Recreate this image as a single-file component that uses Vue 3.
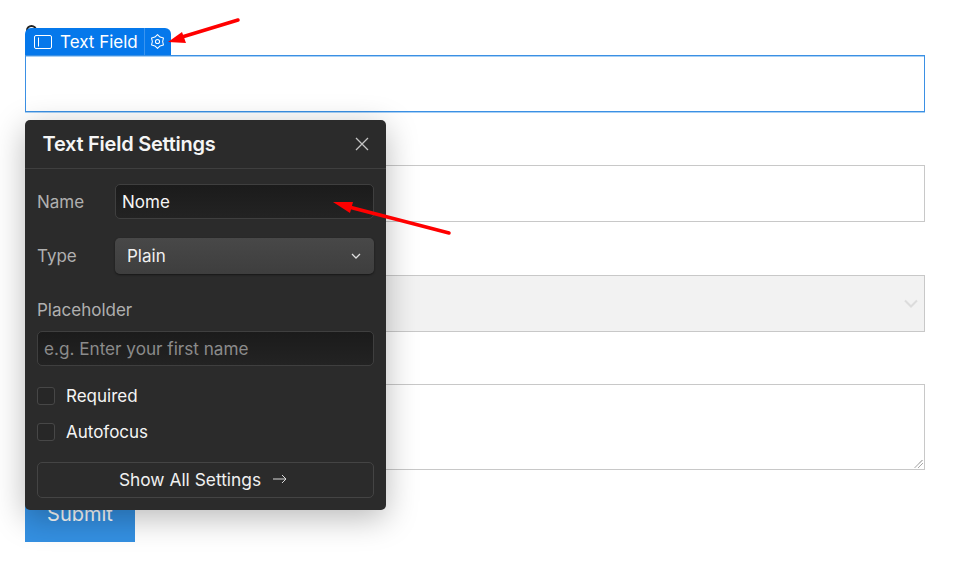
<script setup>
const fields = [
  { kind: 'input', arc: true },
  { kind: 'input' },
  { kind: 'select' },
  { kind: 'textarea' },
]
</script>

<template>
  <div class="page">
    <form class="form" @submit.prevent>
      <div v-for="(f, i) in fields" :key="i" class="group" :class="f.kind">
        <div class="label"><span v-if="f.arc" class="arc"></span></div>
        <div class="control" :class="[f.kind, { selected: i === 0 }]">
          <svg v-if="f.kind === 'select'" class="sel-chev" width="14" height="9" viewBox="0 0 14 9"><path d="M1 1.500l6 6 6-6" fill="none" stroke="#dcdcdc" stroke-width="2"/></svg>
          <svg v-if="f.kind === 'textarea'" class="grip" width="9" height="9" viewBox="0 0 9 9"><path d="M1 8.500L8.500 1M4.500 8.500L8.500 4.500" fill="none" stroke="#555" stroke-width="1" stroke-dasharray="1 .6"/></svg>
        </div>
      </div>
      <button class="submit" type="button">Submit</button>
    </form>

    <div class="tag">
      <span class="tag-main">
        <svg width="18" height="14" viewBox="0 0 18 14"><rect x=".5" y=".5" width="17" height="13" rx="1.500" fill="none" stroke="#fff"/><path d="M4.500 2.500v9" stroke="#fff"/></svg>
        <span class="tag-text">Text Field</span>
      </span>
      <span class="tag-gear">
        <svg width="15" height="15" viewBox="0 0 24 24" fill="none" stroke="#fff" stroke-width="1.700" stroke-linejoin="round"><path d="M12 1L16.100 4.900 21.500 6.500 20.200 12 21.500 17.500 16.100 19.100 12 23 7.900 19.100 2.500 17.500 3.800 12 2.500 6.500 7.900 4.900Z"/><circle cx="12" cy="12" r="3.300"/></svg>
      </span>
    </div>

    <section class="panel">
      <header class="panel-head">
        <h2>Text Field Settings</h2>
        <svg width="14" height="14" viewBox="0 0 14 14"><path d="M1 1l12 12M13 1L1 13" stroke="#c4c4c4" stroke-width="1.300" fill="none"/></svg>
      </header>
      <div class="panel-body">
        <div class="row">
          <span class="plabel">Name</span>
          <div class="pinput">Nome</div>
        </div>
        <div class="row type-row">
          <span class="plabel">Type</span>
          <div class="pselect">
            <span>Plain</span>
            <svg width="10" height="6" viewBox="0 0 10 6"><path d="M1 1l4 4 4-4" fill="none" stroke="#e0e0e0" stroke-width="1.300"/></svg>
          </div>
        </div>
        <span class="plabel ph-label">Placeholder</span>
        <div class="pinput ph">e.g. Enter your first name</div>
        <div class="check first"><i></i><span>Required</span></div>
        <div class="check"><i></i><span>Autofocus</span></div>
        <div class="show">
          <span>Show All Settings</span>
          <svg width="14" height="10" viewBox="0 0 14 10"><path d="M0 5h13M9 1l4 4-4 4" fill="none" stroke="#d8d8d8" stroke-width="1"/></svg>
        </div>
      </div>
    </section>

    <svg class="arrows" width="962" height="565" viewBox="0 0 962 565">
      <path d="M238 20L182 37" stroke="#f00" stroke-width="3.500" stroke-linecap="round"/>
      <path d="M168 42L182 32L186 43Z" fill="#f00"/>
      <path d="M449 233L349 207" stroke="#f00" stroke-width="3.500" stroke-linecap="round"/>
      <path d="M333 202L353 202L350 213Z" fill="#f00"/>
    </svg>
  </div>
</template>

<style>
html, body { margin: 0; background: #fff; }
</style>

<style scoped>
.page {
  position: relative;
  width: 962px;
  height: 565px;
  overflow: hidden;
  background: #fff;
  font-family: Inter, "Liberation Sans", sans-serif;
}
.form { padding: 22px 37px 0 25px; display: flex; flex-direction: column; }
.group { display: flex; flex-direction: column; margin-bottom: 20px; }
.group.textarea { margin-bottom: 16px; }
.group.select { margin-bottom: 19px; }
.label { height: 33px; }
.arc {
  display: block;
  box-sizing: border-box;
  width: 11px;
  height: 11px;
  margin: 3px 0 0 1px;
  border: 2.500px solid #222;
  border-radius: 50%;
}
.control {
  position: relative;
  box-sizing: border-box;
  height: 57px;
  border: 1px solid #c8c8c8;
  background: #fff;
}
.control.selected {
  border-color: #3b90e4;
  box-shadow: 0 1px 0 #a8d0f5, inset 0 1px 0 #a8d0f5;
}
.control.select { background: #f2f2f2; }
.control.textarea { height: 86px; }
.sel-chev { position: absolute; right: 6px; top: 23px; }
.grip { position: absolute; right: 1px; bottom: 1px; }
.submit {
  width: 110px;
  height: 56px;
  border: 0;
  background: #3490e2;
  color: #fff;
  font: 400 20px Inter, "Liberation Sans", sans-serif;
}
.tag {
  position: absolute;
  left: 25px;
  top: 28px;
  height: 27px;
  display: flex;
  background: #0578eb;
  border-radius: 6px 6px 0 0;
  color: #fff;
  font-size: 17px;
}
.tag-main { display: flex; align-items: center; gap: 8px; padding: 0 6px 0 9px; line-height: 27px; }
.tag-text { position: relative; top: 1px; }
.tag-gear { display: flex; align-items: center; justify-content: center; width: 27px; border-left: 1px solid #3a94ef; box-sizing: border-box; }
.panel {
  position: absolute;
  left: 25px;
  top: 120px;
  width: 361px;
  height: 390px;
  background: #2b2b2b;
  border-radius: 5px;
  box-shadow: 0 8px 32px rgba(0,0,0,.28);
  color: #fff;
}
.panel-head {
  height: 49px;
  box-sizing: border-box;
  border-bottom: 1px solid #3f3f3f;
  display: flex;
  align-items: center;
  justify-content: space-between;
  padding: 0 17px 0 18px;
}
.panel-head h2 { margin: 0 0 0 -.5px; font-size: 20px; font-weight: 600; letter-spacing: -.25px; color: #f5f5f5; }
.panel-body { padding: 15px 12px 0; display: flex; flex-direction: column; }
.row { display: flex; align-items: center; }
.type-row { margin-top: 19px; }
.plabel { width: 78px; font-size: 17px; color: #b0b0b0; margin-left: -1px; padding-left: 1px; }
.pinput {
  box-sizing: border-box;
  flex: 1;
  height: 35px;
  line-height: 34px;
  padding: 0 6px;
  border: 1px solid #3f3f3f;
  border-radius: 5px;
  background: linear-gradient(#1b1b1b, #232323);
  font-size: 17px;
  color: #f5f5f5;
}
.pselect {
  flex: 1;
  box-sizing: border-box;
  height: 36px;
  padding: 0 13px 0 12px;
  display: flex;
  align-items: center;
  justify-content: space-between;
  border-radius: 5px;
  background: linear-gradient(#484848, #3e3e3e);
  box-shadow: 0 1px 2px rgba(0,0,0,.5);
  font-size: 17px;
  color: #f0f0f0;
}
.ph-label { width: auto; margin-top: 26px; line-height: 20px; }
.ph { flex: none; margin-top: 11px; color: #8b8b8b; font-size: 17.150px; line-height: 33px; }
.check { display: flex; align-items: center; gap: 11px; height: 20px; font-size: 17px; color: #f5f5f5; margin-top: 16px; }
.check.first { margin-top: 20px; }
.check i { box-sizing: border-box; width: 18px; height: 18px; border: 1px solid #474747; border-radius: 3px; background: #272727; }
.show {
  box-sizing: border-box;
  height: 36px;
  margin-top: 20px;
  padding: 0 5px 2px 0;
  display: flex;
  align-items: center;
  justify-content: center;
  gap: 12px;
  border: 1px solid #444;
  border-radius: 5px;
  font-size: 17.350px;
  color: #f0f0f0;
}
.arrows { position: absolute; left: 0; top: 0; pointer-events: none; }
</style>
